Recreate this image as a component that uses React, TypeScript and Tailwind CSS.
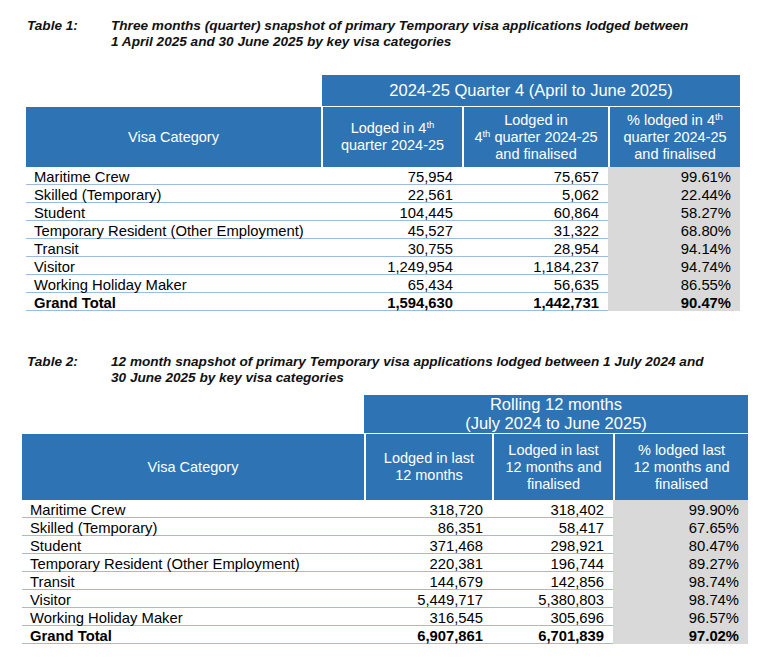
const q4Rows = [
  { name: 'Maritime Crew', a: '75,954', b: '75,657', pct: '99.61%' },
  { name: 'Skilled (Temporary)', a: '22,561', b: '5,062', pct: '22.44%' },
  { name: 'Student', a: '104,445', b: '60,864', pct: '58.27%' },
  { name: 'Temporary Resident (Other Employment)', a: '45,527', b: '31,322', pct: '68.80%' },
  { name: 'Transit', a: '30,755', b: '28,954', pct: '94.14%' },
  { name: 'Visitor', a: '1,249,954', b: '1,184,237', pct: '94.74%' },
  { name: 'Working Holiday Maker', a: '65,434', b: '56,635', pct: '86.55%' },
  { name: 'Grand Total', a: '1,594,630', b: '1,442,731', pct: '90.47%', total: true },
];

const rollingRows = [
  { name: 'Maritime Crew', a: '318,720', b: '318,402', pct: '99.90%' },
  { name: 'Skilled (Temporary)', a: '86,351', b: '58,417', pct: '67.65%' },
  { name: 'Student', a: '371,468', b: '298,921', pct: '80.47%' },
  { name: 'Temporary Resident (Other Employment)', a: '220,381', b: '196,744', pct: '89.27%' },
  { name: 'Transit', a: '144,679', b: '142,856', pct: '98.74%' },
  { name: 'Visitor', a: '5,449,717', b: '5,380,803', pct: '98.74%' },
  { name: 'Working Holiday Maker', a: '316,545', b: '305,696', pct: '96.57%' },
  { name: 'Grand Total', a: '6,907,861', b: '6,701,839', pct: '97.02%', total: true },
];

type Row = { name: string; a: string; b: string; pct: string; total?: boolean };

function Caption({ label, children }: { label: string; children: React.ReactNode }) {
  return (
    <div className="flex pl-[27px] text-[13.6px] leading-[15.5px] font-bold italic text-[#111]">
      <div className="w-[84px] shrink-0">{label}</div>
      <div className="whitespace-nowrap">{children}</div>
    </div>
  );
}

function DataRows({ rows, cols }: { rows: Row[]; cols: string }) {
  return (
    <>
      {rows.map((row) => (
        <div
          key={row.name}
          className={`grid ${cols} h-[18px] border-b border-[#9dbbe0] text-[14.8px] leading-[16px] text-black ${row.total ? 'font-bold' : ''}`}
        >
          <div className="pl-[8px] pt-[2px] whitespace-nowrap">{row.name}</div>
          <div className="pr-[9px] pt-[2px] text-right">{row.a}</div>
          <div className="pr-[9px] pt-[2px] text-right">{row.b}</div>
          <div className="pr-[9px] pt-[2px] text-right bg-[#d9d9d9]">{row.pct}</div>
        </div>
      ))}
    </>
  );
}

function Th() {
  return <sup className="text-[9.5px] relative -top-[5px]">th</sup>;
}

export default function App() {
  return (
    <div
      className="w-[772px] h-[662px] bg-white overflow-hidden"
      style={{ fontFamily: '"Liberation Sans", Arial, sans-serif' }}
    >
      {/* Table 1 */}
      <div className="pt-[18px]">
        <Caption label="Table 1:">
          Three months (quarter) snapshot of primary Temporary visa applications lodged between
          <br />1 April 2025 and 30 June 2025 by key visa categories
        </Caption>
      </div>

      <div className="ml-[26px] mt-[26px] w-[714px]">
        <div className="flex">
          <div className="w-[296px]" />
          <div className="w-[418px] h-[31px] bg-[#2e74b5] text-white text-[16.5px] flex items-center justify-center">
            2024-25 Quarter 4 (April to June 2025)
          </div>
        </div>
        <div className="grid grid-cols-[295px_141px_146px_132px] h-[60px] mt-px text-white text-[14.5px] leading-[17px] text-center">
          <div className="bg-[#2e74b5] flex items-center justify-center">Visa Category</div>
          <div className="bg-[#2e74b5] border-l-2 border-white flex items-center justify-center">
            <span>
              Lodged in 4<Th />
              <br />
              quarter 2024-25
            </span>
          </div>
          <div className="bg-[#2e74b5] border-l-2 border-white flex items-center justify-center">
            <span>
              Lodged in
              <br />4<Th /> quarter 2024-25
              <br />
              and finalised
            </span>
          </div>
          <div className="bg-[#2e74b5] border-l-2 border-white flex items-center justify-center">
            <span>
              % lodged in 4<Th />
              <br />
              quarter 2024-25
              <br />
              and finalised
            </span>
          </div>
        </div>
        <DataRows rows={q4Rows} cols="grid-cols-[295px_141px_146px_132px]" />
      </div>

      {/* Table 2 */}
      <div className="pt-[43px]">
        <Caption label="Table 2:">
          12 month snapshot of primary Temporary visa applications lodged between 1 July 2024 and
          <br />30 June 2025 by key visa categories
        </Caption>
      </div>

      <div className="ml-[22px] mt-[10px] w-[726px]">
        <div className="flex">
          <div className="w-[342px]" />
          <div className="w-[384px] h-[38px] bg-[#2e74b5] text-white text-[16.5px] leading-[19px] flex items-center justify-center text-center">
            <span>
              Rolling 12 months
              <br />
              (July 2024 to June 2025)
            </span>
          </div>
        </div>
        <div className="grid grid-cols-[342px_128px_121px_135px] h-[66px] mt-px text-white text-[14.5px] leading-[17px] text-center">
          <div className="bg-[#2e74b5] flex items-center justify-center">Visa Category</div>
          <div className="bg-[#2e74b5] border-l-2 border-white flex items-center justify-center">
            <span>
              Lodged in last
              <br />
              12 months
            </span>
          </div>
          <div className="bg-[#2e74b5] border-l-2 border-white flex items-center justify-center">
            <span>
              Lodged in last
              <br />
              12 months and
              <br />
              finalised
            </span>
          </div>
          <div className="bg-[#2e74b5] border-l-2 border-white flex items-center justify-center">
            <span>
              % lodged last
              <br />
              12 months and
              <br />
              finalised
            </span>
          </div>
        </div>
        <DataRows rows={rollingRows} cols="grid-cols-[342px_128px_121px_135px]" />
      </div>
    </div>
  );
}
